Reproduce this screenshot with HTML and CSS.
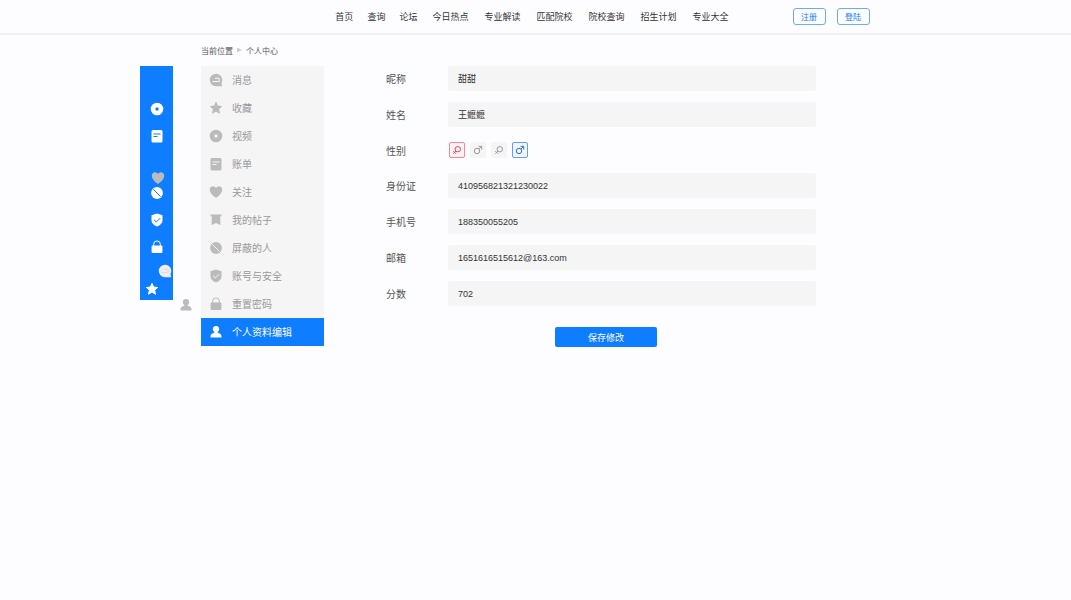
FILE: index.html
```html
<!DOCTYPE html>
<html lang="zh-CN">
<head>
    <meta charset="UTF-8">
    <meta name="viewport" content="width=device-width, initial-scale=1.0">
    <title>个人中心</title>
    <link rel="stylesheet" href="styles.css">
</head>
<body>
    <!-- icon set -->
    <svg class="sprite" aria-hidden="true">
        <symbol id="i-msg" viewBox="0 0 14 14">
            <path fill="currentColor" d="M7 .8a6.200 6.200 0 1 0 0 12.400h5.400c.6 0 .8-.4.6-.9l-.5-2.300A6.200 6.200 0 0 0 7 .8z"/>
            <path class="cut-line" d="M6 5.300h4.200v3.200M3.600 8.500h6.800"/>
        </symbol>
        <symbol id="i-star" viewBox="0 0 14 14">
            <path fill="currentColor" stroke="currentColor" stroke-linejoin="round" d="M7 1.400l1.600 3.700 4 .4-3 2.700.9 4L7 10.100l-3.500 2.100.9-4-3-2.700 4-.4z"/>
        </symbol>
        <symbol id="i-disc" viewBox="0 0 14 14">
            <path fill="currentColor" fill-rule="evenodd" d="M7 .7a6.300 6.300 0 1 0 0 12.600A6.300 6.300 0 0 0 7 .7zm0 4.600a1.700 1.700 0 1 1 0 3.400 1.700 1.700 0 0 1 0-3.400z"/>
        </symbol>
        <symbol id="i-doc" viewBox="0 0 14 14">
            <rect fill="currentColor" x="1.500" y="1" width="11" height="12.500" rx="1.500"/>
            <path class="cut-line" d="M3.500 5h7M3.500 7.500h4"/>
        </symbol>
        <symbol id="i-heart" viewBox="0 0 14 14">
            <path fill="currentColor" d="M7 13C5.500 12 .8 8.700.8 4.800.8 2.800 2.200 1.300 4 1.300c1.300 0 2.400.7 3 1.800.6-1.100 1.700-1.800 3-1.800 1.800 0 3.200 1.500 3.200 3.500C13.200 8.700 8.500 12 7 13z"/>
        </symbol>
        <symbol id="i-post" viewBox="0 0 14 14">
            <path fill="currentColor" d="M1.500 1.500h11v1.800h-1.200V12L7 10 2.700 12V3.300H1.500z"/>
        </symbol>
        <symbol id="i-ban" viewBox="0 0 14 14">
            <circle fill="currentColor" cx="7" cy="7" r="5.900"/>
            <path class="cut-line" d="M3.400 3.400l7.200 7.200"/>
        </symbol>
        <symbol id="i-shield" viewBox="0 0 14 14">
            <path fill="currentColor" d="M7 .5l5.500 1.800v5.200c0 2.800-2.300 4.800-5.500 6-3.200-1.200-5.500-3.200-5.500-6V2.300z"/>
            <path class="cut-line" d="M4 6.800l2.300 2.200 3.900-3.900"/>
        </symbol>
        <symbol id="i-lock" viewBox="0 0 14 14">
            <rect fill="currentColor" x="1.600" y="5.500" width="10.800" height="7.500" rx="1"/>
            <path fill="none" stroke="currentColor" d="M3.700 6V4.200a3.300 3.300 0 0 1 6.600 0V6"/>
        </symbol>
        <symbol id="i-user" viewBox="0 0 14 14">
            <circle fill="currentColor" cx="7" cy="4.200" r="3.100"/>
            <path fill="currentColor" d="M5.500 6.500h3v1.300c2.500.4 4 1.500 4 3.700v.9h-11v-.9c0-2.200 1.500-3.300 4-3.700z"/>
        </symbol>
        <symbol id="i-female" viewBox="0 0 10 10">
            <circle class="line" cx="5.800" cy="4.200" r="2.700"/>
            <path class="line" d="M3.900 6.100L1.300 8.700M1.300 6.100l2.600 2.600"/>
        </symbol>
        <symbol id="i-male" viewBox="0 0 10 10">
            <circle class="line" cx="4" cy="6" r="2.700"/>
            <path class="line" d="M6 4l2.700-2.700M5.500 1.300h3.200v3.200"/>
        </symbol>
    </svg>

    <header class="header">
        <div class="header-inner">
            <nav class="nav">
                <a class="short" href="#">首页</a>
                <a class="short" href="#">查询</a>
                <a class="short" href="#">论坛</a>
                <a href="#">今日热点</a>
                <a href="#">专业解读</a>
                <a href="#">匹配院校</a>
                <a href="#">院校查询</a>
                <a href="#">招生计划</a>
                <a href="#">专业大全</a>
            </nav>
            <div class="account">
                <button type="button">注册</button>
                <button type="button">登陆</button>
            </div>
        </div>
    </header>

    <div class="page">
        <div class="crumbs">
            <span>当前位置</span>
            <i class="arrow"></i>
            <a href="#">个人中心</a>
        </div>

        <div class="content">
            <aside class="rail">
                <svg><use href="#i-disc"/></svg>
                <svg><use href="#i-doc"/></svg>
                <svg class="after-gap"><use href="#i-ban"/></svg>
                <svg><use href="#i-shield"/></svg>
                <svg><use href="#i-lock"/></svg>
                <svg class="float float-heart"><use href="#i-heart"/></svg>
                <svg class="float float-msg"><use href="#i-msg"/></svg>
                <svg class="float float-star"><use href="#i-star"/></svg>
                <svg class="float float-user"><use href="#i-user"/></svg>
            </aside>

            <nav class="menu">
                <a href="#"><svg><use href="#i-msg"/></svg>消息</a>
                <a href="#"><svg><use href="#i-star"/></svg>收藏</a>
                <a href="#"><svg><use href="#i-disc"/></svg>视频</a>
                <a href="#"><svg><use href="#i-doc"/></svg>账单</a>
                <a href="#"><svg><use href="#i-heart"/></svg>关注</a>
                <a href="#"><svg><use href="#i-post"/></svg>我的帖子</a>
                <a href="#"><svg><use href="#i-ban"/></svg>屏蔽的人</a>
                <a href="#"><svg><use href="#i-shield"/></svg>账号与安全</a>
                <a href="#"><svg><use href="#i-lock"/></svg>重置密码</a>
                <a class="active" href="#"><svg><use href="#i-user"/></svg>个人资料编辑</a>
            </nav>

            <form class="profile">
                <div class="row">
                    <label for="nickname">昵称</label>
                    <input type="text" id="nickname" value="甜甜">
                </div>
                <div class="row">
                    <label for="name">姓名</label>
                    <input type="text" id="name" value="王嬷嬷">
                </div>
                <div class="row row-gender" role="group" aria-labelledby="gender">
                    <span class="row-title" id="gender">性别</span>
                    <div class="genders">
                        <label class="gender female"><input type="radio" name="gender1" aria-label="女" checked><svg><use href="#i-female"/></svg></label>
                        <label class="gender male"><input type="radio" name="gender1" aria-label="男"><svg><use href="#i-male"/></svg></label>
                        <label class="gender female"><input type="radio" name="gender2" aria-label="女"><svg><use href="#i-female"/></svg></label>
                        <label class="gender male"><input type="radio" name="gender2" aria-label="男" checked><svg><use href="#i-male"/></svg></label>
                    </div>
                </div>
                <div class="row">
                    <label for="idcard">身份证</label>
                    <input type="text" id="idcard" value="410956821321230022">
                </div>
                <div class="row">
                    <label for="phone">手机号</label>
                    <input type="text" id="phone" value="188350055205">
                </div>
                <div class="row">
                    <label for="email">邮箱</label>
                    <input type="text" id="email" value="1651616515612@163.com">
                </div>
                <div class="row">
                    <label for="score">分数</label>
                    <input type="text" id="score" value="702">
                </div>
                <button class="save" type="button">保存修改</button>
            </form>
        </div>
    </div>
</body>
</html>
```
FILE: styles.css
```css
* {
    box-sizing: border-box;
}
body {
    margin: 0;
    background-color: #fdfdff;
    color: #333;
    font-family: "Liberation Sans", "Noto Sans CJK SC", sans-serif;
    font-size: 9px;
}
a {
    color: inherit;
    text-decoration: none;
}
input, button {
    font: inherit;
}
svg {
    width: 14px;
    height: 14px;
    flex-shrink: 0;
}
.sprite {
    display: none;
}
.line {
    fill: none;
    stroke: currentColor;
}
.cut-line {
    fill: none;
    stroke: var(--cut);
}

/* header */
.header {
    border-bottom: 1px solid #eee;
    box-shadow: 0 1px 1px #f4f4f6;
}
.header-inner {
    display: flex;
    align-items: center;
    justify-content: flex-end;
    gap: 56px;
    max-width: 670px;
    height: 33px;
    margin: 0 auto;
    padding-right: 1px;
}
.nav {
    display: flex;
    white-space: nowrap;
}
.nav a {
    padding: 0 8px;
}
.nav .short {
    padding: 0 7px;
}
.account {
    display: flex;
    gap: 11px;
}
.account button {
    width: 33px;
    height: 17px;
    padding: 0;
    border: 1px solid #66adff;
    border-radius: 3px;
    background: transparent;
    color: #0f7dff;
    font-size: 8px;
}

/* page */
.page {
    max-width: 791px;
    margin: 0 auto;
}
.crumbs {
    display: flex;
    align-items: center;
    gap: 4px;
    height: 32px;
    padding-left: 61px;
    color: #555;
    font-size: 8px;
}
.arrow {
    width: 5px;
    height: 5px;
    background: #ccc;
    clip-path: polygon(0 0, 100% 50%, 0 100%);
}
.content {
    display: flex;
    align-items: flex-start;
}

/* icon rail */
.rail {
    --cut: #0f7dff;
    position: relative;
    display: flex;
    flex-direction: column;
    align-items: center;
    gap: 13px;
    width: 33px;
    height: 234px;
    margin-right: 28px;
    padding-top: 36px;
    background: #0f7dff;
    color: #fff;
}
.after-gap {
    margin-top: 30px;
}
.float {
    position: absolute;
}
.float-heart {
    top: 105px;
    left: 11px;
    color: #bbb;
}
.float-msg {
    --cut: #ddd;
    top: 198px;
    left: 18px;
    color: #eee;
}
.float-star {
    top: 216px;
    left: 5px;
}
.float-user {
    top: 232px;
    left: 39px;
    color: #bbb;
}

/* side menu */
.menu {
    --cut: #f5f5f5;
    width: 123px;
    margin-right: 62px;
    background: #f5f5f5;
    color: #999;
    font-size: 10px;
}
.menu a {
    display: flex;
    align-items: center;
    gap: 9px;
    height: 28px;
    padding: 0 0 1px 8px;
}
.menu svg {
    color: #bbb;
}
.menu .active,
.menu .active svg {
    background: #0f7dff;
    color: #fff;
}

/* profile form */
.profile {
    flex: 1;
    max-width: 430px;
}
.row {
    display: flex;
    align-items: center;
    height: 25px;
    margin-bottom: 11px;
}
.row-gender {
    height: 24px;
}
.row > label,
.row-title {
    width: 62px;
    color: #555;
    font-size: 10px;
}
.row > input {
    flex: 1;
    min-width: 0;
    height: 25px;
    padding: 0 10px;
    border: 0;
    border-radius: 2px;
    background: #f5f5f5;
    color: #333;
}
.genders {
    display: flex;
    gap: 5px;
    padding-left: 1px;
}
.gender {
    position: relative;
    display: flex;
    align-items: center;
    justify-content: center;
    width: 16px;
    height: 16px;
    border: 1px solid transparent;
    border-radius: 2px;
    background: #f5f5f5;
    color: #999;
}
.gender input {
    position: absolute;
    inset: 0;
    margin: 0;
    opacity: 0;
}
.gender svg {
    width: 10px;
    height: 10px;
}
.female:has(:checked) {
    border-color: #ff8295;
    color: #ff3b57;
}
.male:has(:checked) {
    border-color: #5c9fff;
    color: #1f78f0;
}
.save {
    display: block;
    width: 102px;
    height: 20px;
    margin: 21px 0 0 169px;
    padding: 0;
    border: 0;
    border-radius: 2px;
    background: #0f7dff;
    color: #fff;
}
```
